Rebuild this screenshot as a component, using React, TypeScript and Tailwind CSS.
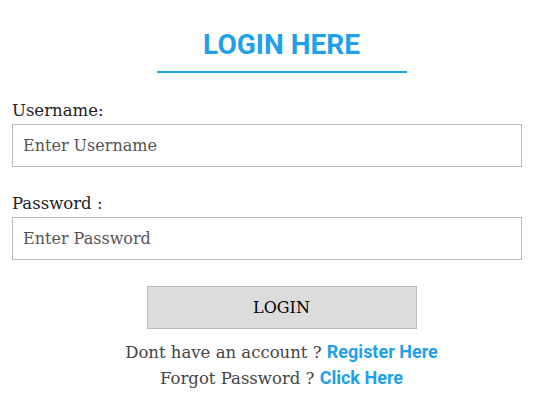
const App = () => {
  return (
    <div className="w-[535px] h-[410px] bg-white px-3 pt-[28px] font-['DejaVu_Serif',serif] text-[#222]">
      <div className="flex flex-col items-center pl-[28px]">
        <h1 className="font-['Roboto',sans-serif] font-bold text-[28px] leading-[34px] text-[#1ea1e9]">
          LOGIN HERE
        </h1>
        <div className="w-[250px] h-[2px] bg-[#1ea1e9] mt-[9px]" />
      </div>
      <form className="mt-[28px]">
        <label className="block text-[16.5px] leading-[20px]">Username:</label>
        <input
          type="text"
          placeholder="Enter Username"
          className="block w-[510px] h-[43px] mt-[3px] border border-[#bbb] px-[10px] text-[16px] placeholder:text-[#555] outline-none"
        />
        <label className="block text-[16.5px] leading-[20px] mt-[27px]">Password :</label>
        <input
          type="password"
          placeholder="Enter Password"
          className="block w-[510px] h-[43px] mt-[3px] border border-[#bbb] px-[10px] text-[16px] placeholder:text-[#555] outline-none"
        />
        <div className="flex justify-center pl-[28px] mt-[26px]">
          <button
            type="button"
            className="w-[270px] h-[43px] bg-[#dcdcdc] border border-[#bbb] text-[16px] text-black"
          >
            LOGIN
          </button>
        </div>
        <div className="pl-[28px] mt-[10px] text-center text-[16.5px] leading-[25px] text-[#444]">
          <p>
            Dont have an account ?{" "}
            <a className="font-['Roboto',sans-serif] font-bold text-[18px] text-[#1ea1e9]">Register Here</a>
          </p>
          <p>
            Forgot Password ?{" "}
            <a className="font-['Roboto',sans-serif] font-bold text-[18px] text-[#1ea1e9]">Click Here</a>
          </p>
        </div>
      </form>
    </div>
  );
};

export default App;
